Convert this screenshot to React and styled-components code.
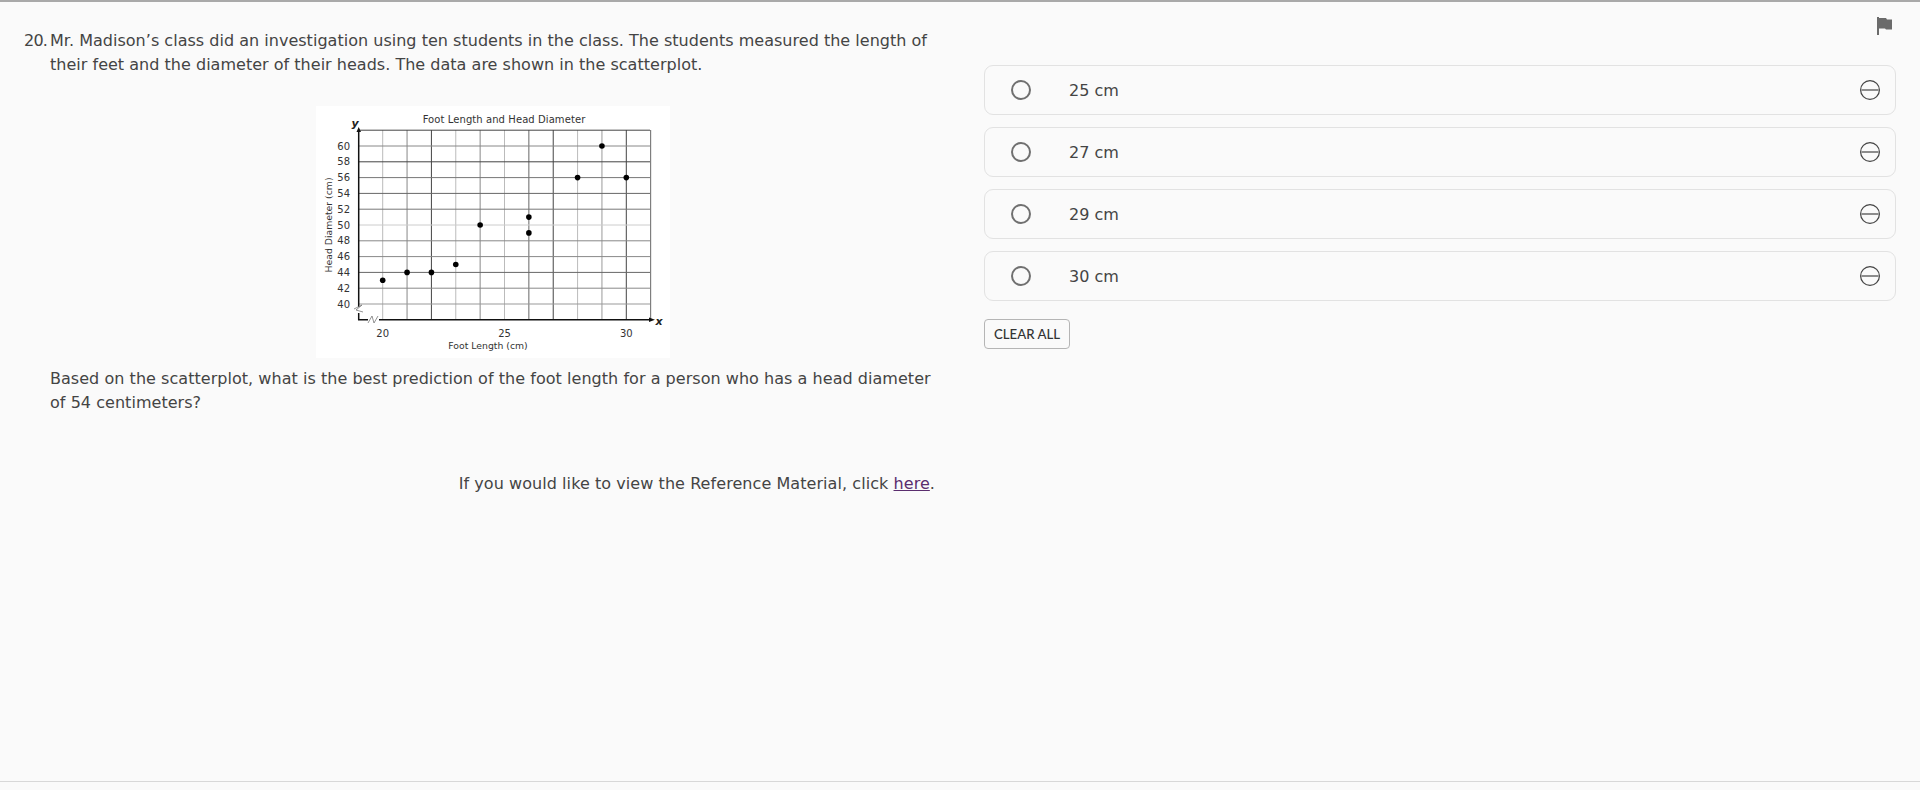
import React from "react";
import styled, { createGlobalStyle } from "styled-components";

const Global = createGlobalStyle`
    html, body {
        margin: 0;
        padding: 0;
        background: #fafafa;
    }
`;

const Page = styled.div`
    height: 790px;
    display: flex;
    flex-direction: column;
    overflow: hidden;
    box-sizing: border-box;
    border-top: 2px solid #a9a9a9;
    padding-bottom: 8px;
    background: #fafafa;
    color: #444;
    font-family: "DejaVu Sans", Verdana, sans-serif;
    font-size: 16px;
    line-height: 24px;
`;

const Content = styled.div`
    flex: 1;
    display: flex;
    align-items: flex-start;
    border-bottom: 1.5px solid #d8d8d8;
`;

const Question = styled.div`
    display: flex;
    width: 911px;
    padding: 27px 0 0 24px;
    box-sizing: border-box;
`;

const Number = styled.div`
    width: 26px;
    flex: none;
    letter-spacing: -0.8px;
`;

const Body = styled.div`
    width: 885px;
    flex: none;
`;

const Para = styled.p`
    margin: 0;
    letter-spacing: ${(p) => p.$spacing};
`;

const Figure = styled.div`
    display: flex;
    justify-content: center;
    margin: 29px 0 9px;
    padding-left: 1px;
`;

const Note = styled.p`
    margin: 57px 0 0;
    text-align: right;
    letter-spacing: 0.065px;

    & > a {
        color: #5a2d6e;
        text-decoration: underline;
    }
`;

const Answers = styled.div`
    position: relative;
    width: 912px;
    margin-left: 73px;
    padding-top: 63px;
    display: flex;
    flex-direction: column;
    align-items: flex-start;
    gap: 12px;
`;

const FlagIcon = styled.svg`
    position: absolute;
    top: 15px;
    right: 3px;
`;

const Option = styled.div`
    width: 100%;
    height: 50px;
    box-sizing: border-box;
    display: flex;
    align-items: center;
    padding: 0 14px 0 26px;
    background: #fafafa;
    border: 1.5px solid #e2e2e2;
    border-radius: 9px;
`;

const Radio = styled.span`
    width: 20px;
    height: 20px;
    flex: none;
    box-sizing: border-box;
    border: 2px solid #707070;
    border-radius: 50%;
`;

const Label = styled.span`
    margin-left: 38px;
    padding-top: 1px;
    flex: 1;
`;

const ClearButton = styled.button`
    margin-top: 6px;
    width: 86px;
    height: 30px;
    padding: 0;
    background: #fafafa;
    border: 1px solid #b5b5b5;
    border-radius: 4px;
    color: #333;
    font-family: Lato, sans-serif;
    font-size: 13.2px;
    font-weight: 500;
`;

const ChartFrame = styled.svg`
    display: block;
    background: #fff;
`;

const vertical = [
    [20, "#bbb"], [21, "#888"], [22, "#444"], [23, "#bbb"], [24, "#888"], [25, "#bbb"],
    [26, "#666"], [27, "#444"], [28, "#bbb"], [29, "#999"], [30, "#444"], [31, "#666"],
];
const horizontal = [
    [40, "#999"], [42, "#888"], [44, "#666"], [46, "#888"], [48, "#888"], [50, "#ccc"],
    [52, "#777"], [54, "#666"], [56, "#777"], [58, "#444"], [60, "#888"], [62, "#444"],
];
const points = [
    [20, 43], [21, 44], [22, 44], [23, 45], [24, 50], [26, 51],
    [26, 49], [28, 56], [29, 60], [30, 56],
];
const px = (x) => 66.7 + (x - 20) * 24.36;
const py = (y) => 198 - (y - 40) * 7.9;

const Chart = () => (
    <ChartFrame width="354" height="252" viewBox="0 0 354 252">
        <g fontFamily="'DejaVu Sans', Verdana, sans-serif" fontSize="10" fill="#333">
            <text x="188" y="17" textAnchor="middle" letterSpacing="0.08">Foot Length and Head Diameter</text>
            {horizontal.slice(0, 11).map(([v]) => (
                <text key={v} x="34" y={py(v) + 3.5} textAnchor="end">{v}</text>
            ))}
            {[20, 25, 30].map((v) => (
                <text key={v} x={px(v)} y="231" textAnchor="middle">{v}</text>
            ))}
            <text x="172" y="243" textAnchor="middle" fontSize="9.3">Foot Length (cm)</text>
            <text transform="translate(16 119) rotate(-90)" textAnchor="middle" fontSize="9.3">Head Diameter (cm)</text>
        </g>
        <g fontFamily="'DejaVu Sans', Verdana, sans-serif" fontSize="11" fontWeight="700" fontStyle="italic" fill="#222" textAnchor="middle">
            <text x="39" y="21">y</text>
            <text x="343" y="219">x</text>
        </g>
        {vertical.map(([v, c]) => (
            <line key={v} x1={px(v)} x2={px(v)} y1="24" y2="213.7" stroke={c} strokeWidth="1" />
        ))}
        {horizontal.map(([v, c]) => (
            <line key={v} x1="42.7" x2="334" y1={py(v)} y2={py(v)} stroke={c} strokeWidth="1" />
        ))}
        <path d="M42.7 26V201M42.7 207V213.7H52M63 213.7H333" fill="none" stroke="#111" strokeWidth="1.5" />
        <path d="M40.5 26L42.7 21L45 26ZM333 211.5L339 213.7L333 216Z" fill="#111" />
        <path d="M38 203L46 199L40 204L47 206" fill="none" stroke="#777" strokeWidth="0.8" />
        <path d="M52 217L56 210L58 217L62 210" fill="none" stroke="#777" strokeWidth="0.8" />
        {points.map(([x, y]) => (
            <circle key={`${x}-${y}`} cx={px(x)} cy={py(y)} r="2.8" fill="#000" />
        ))}
    </ChartFrame>
);

const MinusCircle = () => (
    <svg width="22" height="22" viewBox="0 0 22 22">
        <circle cx="11" cy="11" r="9.4" fill="none" stroke="#444" strokeWidth="1.2" />
        <path d="M2.5 11H19.5" stroke="#444" strokeWidth="1.2" />
    </svg>
);

const answers = ["25 cm", "27 cm", "29 cm", "30 cm"];

export default function App() {
    return (
        <Page>
            <Global />
            <Content>
                <Question>
                    <Number>20.</Number>
                    <Body>
                        <Para $spacing="0.02px">
                            Mr. Madison’s class did an investigation using ten students in the class. The students measured the length of their feet and the diameter of their heads. The data are shown in the scatterplot.
                        </Para>
                        <Figure>
                            <Chart />
                        </Figure>
                        <Para $spacing="0.04px">
                            Based on the scatterplot, what is the best prediction of the foot length for a person who has a head diameter of 54 centimeters?
                        </Para>
                        <Note>
                            If you would like to view the Reference Material, click <a href="#here">here</a>.
                        </Note>
                    </Body>
                </Question>
                <Answers>
                    <FlagIcon width="17" height="18" viewBox="0 0 17 18">
                        <path d="M1 0H3V18H1ZM3 1H10L11 2.5H16V12.5H10L9 11.5H3Z" fill="#6b6b6b" />
                    </FlagIcon>
                    {answers.map((a) => (
                        <Option key={a}>
                            <Radio />
                            <Label>{a}</Label>
                            <MinusCircle />
                        </Option>
                    ))}
                    <ClearButton>CLEAR ALL</ClearButton>
                </Answers>
            </Content>
        </Page>
    );
}
